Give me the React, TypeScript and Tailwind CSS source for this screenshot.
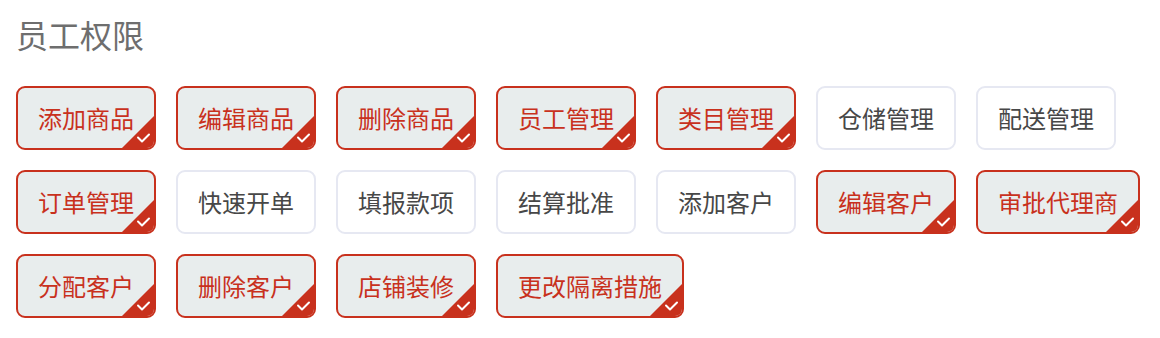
import React from "react";

const items: { label: string; on: boolean }[] = [
  { label: "添加商品", on: true },
  { label: "编辑商品", on: true },
  { label: "删除商品", on: true },
  { label: "员工管理", on: true },
  { label: "类目管理", on: true },
  { label: "仓储管理", on: false },
  { label: "配送管理", on: false },
  { label: "订单管理", on: true },
  { label: "快速开单", on: false },
  { label: "填报款项", on: false },
  { label: "结算批准", on: false },
  { label: "添加客户", on: false },
  { label: "编辑客户", on: true },
  { label: "审批代理商", on: true },
  { label: "分配客户", on: true },
  { label: "删除客户", on: true },
  { label: "店铺装修", on: true },
  { label: "更改隔离措施", on: true },
];

function Tag({ label, on }: { label: string; on: boolean }) {
  if (on) {
    return (
      <div className="relative flex h-[64px] min-w-[140px] items-center justify-center overflow-hidden rounded-[9px] border-2 border-[#c8311d] bg-[#e8eded] px-[20px] text-[24px] leading-none text-[#c8311d]">
        <span>{label}</span>
        <svg
          className="absolute bottom-0 right-0"
          width="32"
          height="32"
          viewBox="0 0 32 32"
        >
          <polygon points="32,0 32,32 0,32" fill="#c8311d" />
          <path
            d="M16 21.5 L20 25.5 L27 18.5"
            fill="none"
            stroke="#ffffff"
            strokeWidth="2"
            strokeLinecap="round"
            strokeLinejoin="round"
          />
        </svg>
      </div>
    );
  }
  return (
    <div className="flex h-[64px] min-w-[140px] items-center justify-center rounded-[9px] border-2 border-[#e6e8f2] bg-white px-[20px] text-[24px] leading-none text-[#474747]">
      <span>{label}</span>
    </div>
  );
}

export default function App() {
  return (
    <div
      className="h-[338px] w-[1160px] bg-white px-4 pt-[18px]"
      style={{ fontFamily: '"Noto Sans CJK SC", "Noto Sans", sans-serif' }}
    >
      <div className="text-[32px] leading-[32px] text-[#6e6e6e]">员工权限</div>
      <div className="mt-[36px] flex flex-wrap gap-[20px]">
        {items.map((it) => (
          <Tag key={it.label} label={it.label} on={it.on} />
        ))}
      </div>
    </div>
  );
}
